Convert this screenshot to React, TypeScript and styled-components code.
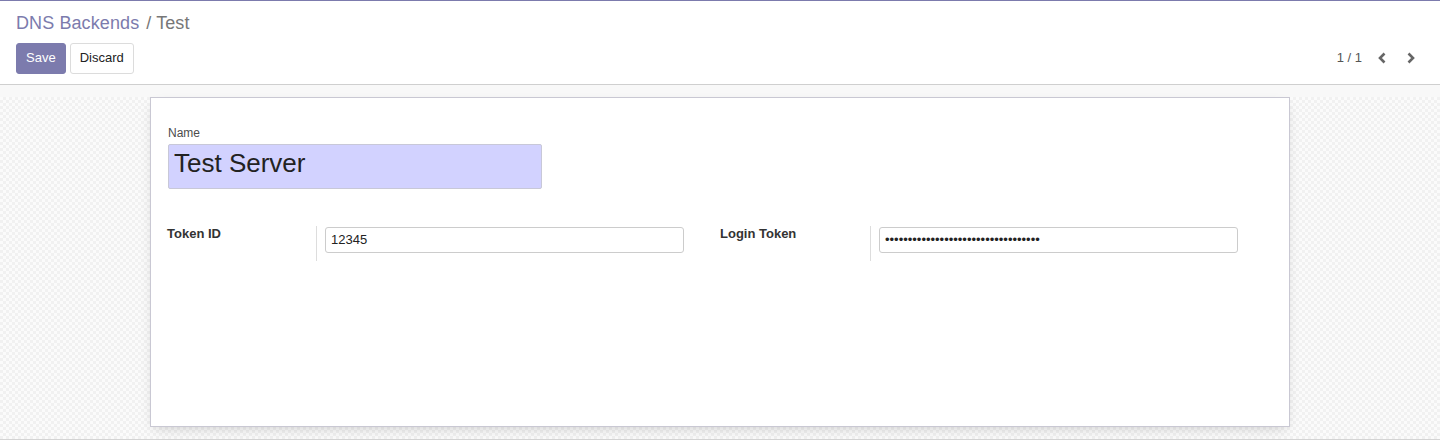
import React from "react";
import styled, { createGlobalStyle } from "styled-components";

const GlobalStyle = createGlobalStyle`
  html, body { margin: 0; padding: 0; background: #ffffff; }
  body {
    font-family: "Liberation Sans", Arial, sans-serif;
    font-size: 13px;
    color: #4c4c4c;
  }
  * { box-sizing: border-box; }
`;

const Page = styled.div`
  width: 1440px;
  height: 440px;
  overflow: hidden;
  display: flex;
  flex-direction: column;
  border-top: 1px solid #7c7bad;
`;

const ControlPanel = styled.div`
  display: flex;
  flex-direction: column;
  padding: 9px 16px 10px 16px;
  background: #ffffff;
  border-bottom: 1px solid #cfcfcf;
`;

const Breadcrumb = styled.div`
  font-size: 18px;
  line-height: 26px;
  height: 26px;
  display: flex;
  align-items: center;
  gap: 7px;
`;

const Crumb = styled.span<{ $active?: boolean }>`
  color: ${(p) => (p.$active ? "#777777" : "#7c7bad")};
  letter-spacing: 0.1px;
`;

const ButtonRow = styled.div`
  display: flex;
  align-items: center;
  justify-content: space-between;
  margin-top: 7px;
`;

const Buttons = styled.div`
  display: flex;
  gap: 4px;
`;

const Button = styled.button<{ $primary?: boolean }>`
  height: 31px;
  padding: 0 9px 2px 9px;
  font-family: "Liberation Sans", Arial, sans-serif;
  font-size: 13px;
  border-radius: 3px;
  border: 1px solid ${(p) => (p.$primary ? "#7c7bad" : "#dcdcdc")};
  background: ${(p) => (p.$primary ? "#7c7bad" : "#ffffff")};
  color: ${(p) => (p.$primary ? "#ffffff" : "#222222")};
  cursor: pointer;
`;

const Pager = styled.div`
  display: flex;
  align-items: center;
  color: #555555;
  font-size: 13px;
  margin-bottom: 2px;
`;

const PagerValue = styled.span`
  margin-right: 6px;
`;

const PagerButton = styled.span`
  width: 28px;
  height: 20px;
  display: flex;
  align-items: center;
  justify-content: center;
  color: #666666;
`;

const StatusStrip = styled.div`
  height: 12px;
  background: #f8f8f8;
`;

const FormArea = styled.div`
  flex: 0 0 auto;
  padding: 0 0 12px 0;
  background-color: #fbfbfb;
  background-image: conic-gradient(
    #f1f1f1 25%,
    transparent 0 50%,
    #f1f1f1 0 75%,
    transparent 0
  );
  background-size: 6px 6px;
  border-bottom: 1px solid #d4d4d4;
`;

const Sheet = styled.div`
  width: 1140px;
  min-height: 330px;
  margin: 0 auto 0 150px;
  background: #ffffff;
  border: 1px solid #c9c8d3;
  box-shadow: 0 5px 12px -4px rgba(0, 0, 0, 0.18);
  padding: 27px 16px 16px 16px;
`;

const TitleBlock = styled.div`
  margin-left: 1px;
  display: flex;
  flex-direction: column;
`;

const TitleLabel = styled.label`
  font-size: 12px;
  line-height: 17px;
  color: #4c4c4c;
`;

const TitleInput = styled.input`
  width: 374px;
  height: 45px;
  margin-top: 2px;
  padding: 0 5px 6px 5px;
  font-family: "Liberation Sans", Arial, sans-serif;
  font-size: 26px;
  color: #222222;
  background: #d2d2ff;
  border: 1px solid #c8c8d8;
  border-radius: 2px;
  outline: none;
`;

const Group = styled.div`
  display: grid;
  grid-template-columns: 1fr 1fr;
  margin-top: 37px;
`;

const FieldRow = styled.div`
  display: flex;
  align-items: flex-start;
`;

const FieldLabel = styled.div<{ $width: number }>`
  width: ${(p) => p.$width}px;
  font-weight: bold;
  font-size: 13px;
  line-height: 16px;
  color: #333333;
`;

const FieldCell = styled.div`
  border-left: 1px solid #dddddd;
  padding: 1px 0 8px 8px;
`;

const TextInput = styled.input`
  width: 359px;
  height: 26px;
  padding: 0 5px 1px 5px;
  font-family: "Liberation Sans", Arial, sans-serif;
  font-size: 13px;
  color: #222222;
  background: #ffffff;
  border: 1px solid #cccccc;
  border-radius: 3px;
  outline: none;
`;

const Chevron = ({ dir }: { dir: "left" | "right" }) => (
  <svg width="9" height="12" viewBox="0 0 9 12" aria-hidden="true">
    <path
      d={dir === "left" ? "M6.5 1.5 L2 6 L6.5 10.5" : "M2.5 1.5 L7 6 L2.5 10.5"}
      fill="none"
      stroke="currentColor"
      strokeWidth="2.6"
      strokeLinecap="butt"
      strokeLinejoin="miter"
    />
  </svg>
);

export default function App() {
  return (
    <>
      <GlobalStyle />
      <Page>
        <ControlPanel>
          <Breadcrumb>
            <Crumb>DNS Backends</Crumb>
            <Crumb $active>/ Test</Crumb>
          </Breadcrumb>
          <ButtonRow>
            <Buttons>
              <Button $primary>Save</Button>
              <Button>Discard</Button>
            </Buttons>
            <Pager>
              <PagerValue>1 / 1</PagerValue>
              <PagerButton>
                <Chevron dir="left" />
              </PagerButton>
              <PagerButton>
                <Chevron dir="right" />
              </PagerButton>
            </Pager>
          </ButtonRow>
        </ControlPanel>
        <StatusStrip />
        <FormArea>
          <Sheet>
            <TitleBlock>
              <TitleLabel>Name</TitleLabel>
              <TitleInput defaultValue="Test Server" />
            </TitleBlock>
            <Group>
              <FieldRow>
                <FieldLabel $width={149}>Token ID</FieldLabel>
                <FieldCell>
                  <TextInput defaultValue="12345" />
                </FieldCell>
              </FieldRow>
              <FieldRow>
                <FieldLabel $width={150}>Login Token</FieldLabel>
                <FieldCell>
                  <TextInput type="password" defaultValue="abcdefghijklmnopqrstuvwxyz12345678" />
                </FieldCell>
              </FieldRow>
            </Group>
          </Sheet>
        </FormArea>
      </Page>
    </>
  );
}
